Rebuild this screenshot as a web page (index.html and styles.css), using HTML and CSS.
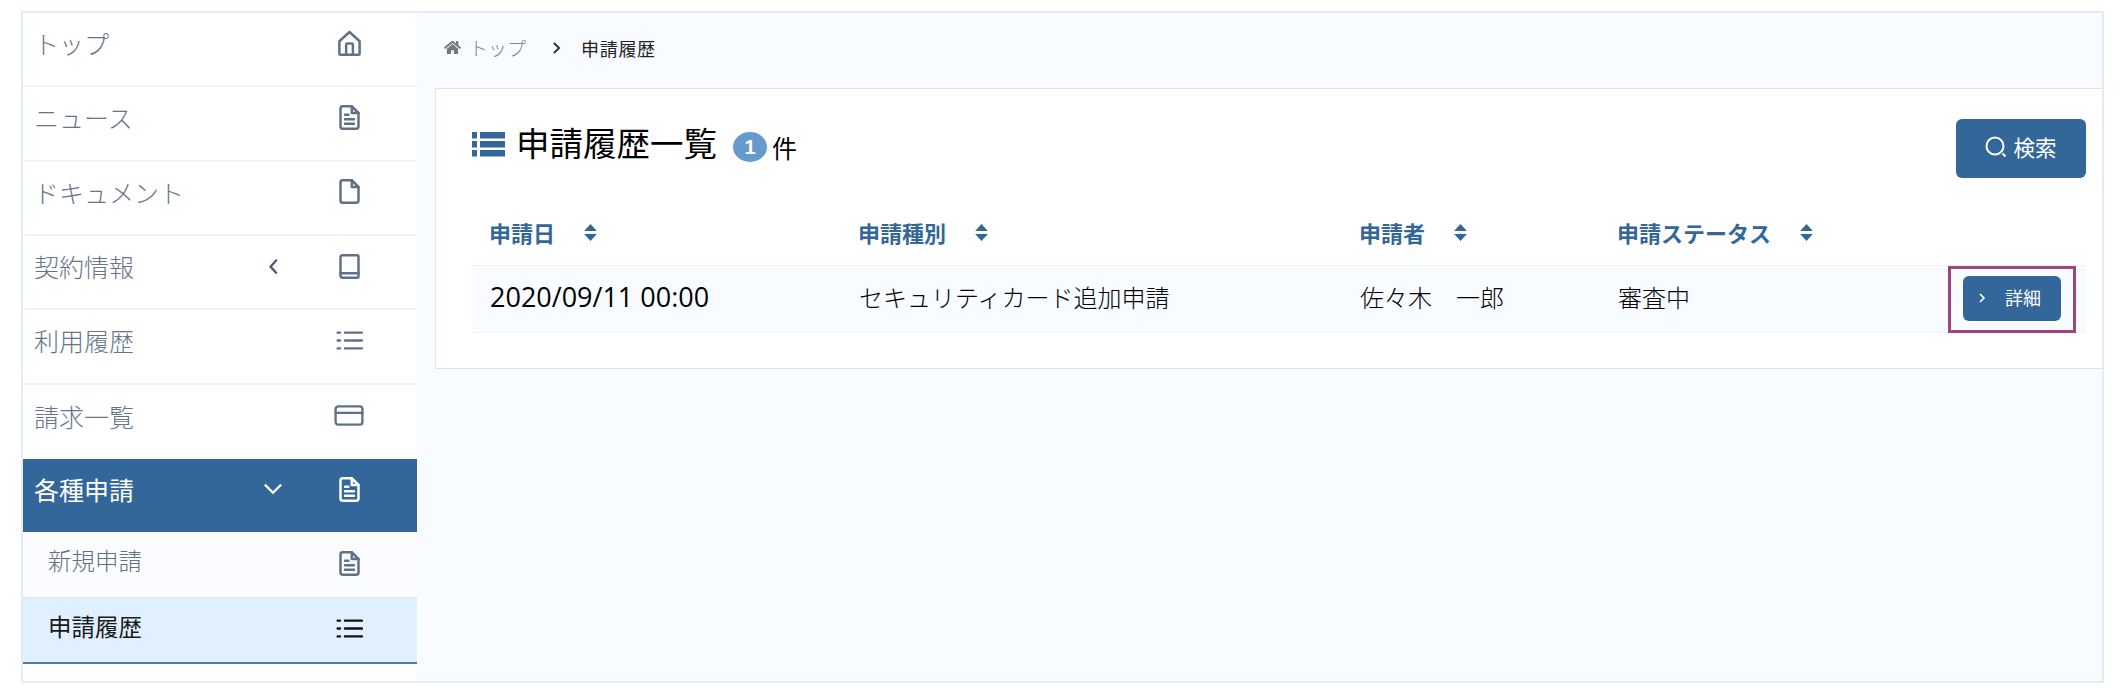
FILE: index.html
```html
<!DOCTYPE html>
<html lang="ja">
<head>
<meta charset="utf-8">
<title>申請履歴</title>
<link rel="stylesheet" href="styles.css">
</head>
<body>
<svg class="defs" width="0" height="0" aria-hidden="true">
  <defs>
    <symbol id="i-home" viewBox="0 0 24 24"><path d="M4 22h16a1 1 0 0 0 1-1V10L12 1.800 3 10v11a1 1 0 0 0 1 1z"/><path d="M9 22v-9a1 1 0 0 1 1-1h4a1 1 0 0 1 1 1v9"/></symbol>
    <symbol id="i-doc" viewBox="0 0 24 24"><path d="M14 2H6a2 2 0 0 0-2 2v16a2 2 0 0 0 2 2h12a2 2 0 0 0 2-2V8z"/><path d="M14 2v6h6"/><path d="M8 9.500h3M8 13.500h8M8 17.500h8"/></symbol>
    <symbol id="i-file" viewBox="0 0 24 24"><path d="M14 2H6a2 2 0 0 0-2 2v16a2 2 0 0 0 2 2h12a2 2 0 0 0 2-2V8z"/><path d="M14 2v6h6"/></symbol>
    <symbol id="i-book" viewBox="0 0 24 24"><path d="M6 2h13a1 1 0 0 1 1 1v18a1 1 0 0 1-1 1H6a2 2 0 0 1-2-2V4a2 2 0 0 1 2-2z"/><path d="M4 18h16"/></symbol>
    <symbol id="i-list" viewBox="0 0 24 24"><path d="M8 5h15M8 12h15M8 19h15"/><path d="M1.500 5h2M1.500 12h2M1.500 19h2"/></symbol>
    <symbol id="i-card" viewBox="0 0 28 24"><rect x="1.500" y="3.500" width="25" height="17" rx="2.500"/><path d="M1.500 9.500h25"/></symbol>
    <symbol id="i-sort" viewBox="0 0 12 16"><path d="M6 0l6 6.500H0zM6 16L0 9.500h12z"/></symbol>
  </defs>
</svg>
<div class="frame">
  <nav class="side">
    <a class="item"><span class="label">トップ</span><span class="chev"></span><svg class="ico"><use href="#i-home"/></svg></a>
    <a class="item"><span class="label">ニュース</span><span class="chev"></span><svg class="ico"><use href="#i-doc"/></svg></a>
    <a class="item"><span class="label">ドキュメント</span><span class="chev"></span><svg class="ico"><use href="#i-file"/></svg></a>
    <a class="item"><span class="label">契約情報</span><span class="chev"><svg class="chev-svg" viewBox="0 0 16 16"><path d="M11 3L6 8.500l5 5.500"/></svg></span><svg class="ico"><use href="#i-book"/></svg></a>
    <a class="item"><span class="label">利用履歴</span><span class="chev"></span><svg class="ico"><use href="#i-list"/></svg></a>
    <a class="item"><span class="label">請求一覧</span><span class="chev"></span><svg class="ico ico-wide"><use href="#i-card"/></svg></a>
    <a class="item active"><span class="label">各種申請</span><span class="chev"><svg class="chev-svg" viewBox="0 0 16 16"><path d="M1.500 4.500L8 11l6.500-6.500"/></svg></span><svg class="ico"><use href="#i-doc"/></svg></a>
    <a class="item sub"><span class="label">新規申請</span><span class="chev"></span><svg class="ico"><use href="#i-doc"/></svg></a>
    <a class="item sub current"><span class="label">申請履歴</span><span class="chev"></span><svg class="ico"><use href="#i-list"/></svg></a>
  </nav>
  <main class="main">
    <div class="crumbs">
      <svg class="crumb-home" viewBox="0 0 576 512"><path d="M280 148L96 300v164a16 16 0 0 0 16 16l112-.3a16 16 0 0 0 16-16V368a16 16 0 0 1 16-16h64a16 16 0 0 1 16 16v96a16 16 0 0 0 16 16l112 .3a16 16 0 0 0 16-16V300L296 148a12 12 0 0 0-16 0zM572 251l-84-69V44a12 12 0 0 0-12-12h-56a12 12 0 0 0-12 12v72l-89-74a48 48 0 0 0-61 0L4 251a12 12 0 0 0-2 17l26 31a12 12 0 0 0 17 2L280 107a12 12 0 0 1 16 0l235 194a12 12 0 0 0 17-2l26-31a12 12 0 0 0-2-17z"/></svg>
      <span class="crumb-top">トップ</span>
      <svg class="crumb-sep" viewBox="0 0 10 14"><path d="M2 2l5 5-5 5"/></svg>
      <span class="crumb-cur">申請履歴</span>
    </div>
    <section class="card">
      <header class="card-head">
        <div class="title">
          <svg class="title-ico" viewBox="0 0 33 26"><path d="M0 1h5v6.500H0zM8 1h25v6.500H8zM0 10h5v6.500H0zM8 10h25v6.500H8zM0 19h5v6.500H0zM8 19h25v6.500H8z"/></svg>
          <h1 class="title-text">申請履歴一覧</h1>
          <span class="badge">1</span>
          <span class="count">件</span>
        </div>
        <button class="btn-search"><svg class="search-ico" viewBox="0 0 22 22"><circle cx="10" cy="10" r="8.500"/><path d="M17.500 17.500l3 3"/></svg>検索</button>
      </header>
      <table class="table">
        <colgroup><col class="c1"><col class="c2"><col class="c3"><col class="c4"><col></colgroup>
        <thead>
          <tr>
            <th><span class="th-in">申請日<svg class="sort"><use href="#i-sort"/></svg></span></th>
            <th><span class="th-in">申請種別<svg class="sort"><use href="#i-sort"/></svg></span></th>
            <th><span class="th-in">申請者<svg class="sort"><use href="#i-sort"/></svg></span></th>
            <th><span class="th-in">申請ステータス<svg class="sort"><use href="#i-sort"/></svg></span></th>
            <th></th>
          </tr>
        </thead>
        <tbody>
          <tr>
            <td class="date">2020/09/11 00:00</td>
            <td>セキュリティカード追加申請</td>
            <td>佐々木　一郎</td>
            <td>審査中</td>
            <td class="action">
              <span class="mark">
                <button class="btn-detail"><svg class="detail-chev" viewBox="0 0 8 12"><path d="M2 2l4 4-4 4"/></svg><span>詳細</span></button>
              </span>
            </td>
          </tr>
        </tbody>
      </table>
    </section>
  </main>
</div>
</body>
</html>
```

FILE: styles.css
```css
* { box-sizing: border-box; }
html, body { margin: 0; padding: 0; height: 690px; overflow: hidden; background: #fff; }
body { font-family: "Noto Sans CJK JP", "Noto Sans", sans-serif; color: #111; }
.defs { position: absolute; }
.frame {
  display: flex;
  width: 2083px;
  height: 672px;
  margin: 11px 0 0 21px;
  border: 2px solid #e0ecf8;
  background: #f8fbff;
}
.side { width: 394px; flex: none; background: #fff; display: flex; flex-direction: column; }
.item {
  display: grid;
  grid-template-columns: 1fr 64px 86px;
  align-items: center;
  height: 74.33px;
  padding: 0 25px 12px 11px;
  font-size: 25px;
  line-height: 1.2;
  color: #66768a;
  border-bottom: 2px solid #f1f3f5;
}
.item:nth-child(6) { border-bottom: 0; }
.label { white-space: nowrap; font-weight: 300; }
.chev { display: flex; justify-content: center; color: #4a5b70; margin-left: -2px; }
.chev-svg { width: 20px; height: 20px; fill: none; stroke: currentColor; stroke-width: 1.8; }
.ico {
  width: 27px; height: 27px;
  justify-self: center;
  fill: none; stroke: #5f7186; stroke-width: 2.2; stroke-linejoin: round; stroke-linecap: round;
}
.ico-wide { width: 30px; }
.active { background: #336699; color: #fff; height: 73px; border-bottom: 0; }
.active .label { font-weight: 400; }
.active .chev { color: #fff; }
.active .ico { stroke: #fff; }
.sub {
  height: 66px;
  padding: 0 25px 8px 25px;
  font-size: 23.500px;
  background: #fbfcff;
  color: #66707c;
  border-bottom: 1px solid #e3e5e8;
}
.sub .ico { transform: translateY(3px); }
.current { background: #e1f0ff; color: #1a1a1a; border-bottom: 2px solid #4f7ba6; }
.current .ico { stroke: #111; }
.current .label { font-weight: 400; }
.main { flex: 1; min-width: 0; display: flex; flex-direction: column; }
.crumbs { display: flex; align-items: center; height: 75px; padding: 0 0 6px 27px; font-size: 18px; }
.crumb-home { width: 17px; height: 15px; fill: #777; }
.crumb-top { margin-left: 8px; color: #80868c; font-size: 19px; font-weight: 300; width: 60px; white-space: nowrap; }
.crumb-sep { width: 10px; height: 14px; margin-left: 23px; fill: none; stroke: #333; stroke-width: 2; }
.crumb-cur { margin-left: 19px; letter-spacing: .7px; color: #222; }
.card {
  margin-left: 18px;
  height: 281px;
  background: #fff;
  border: 1px solid #e3e3e3;
  border-right: 0;
  padding: 30px 16px 0 36px;
}
.card-head { display: flex; justify-content: space-between; align-items: flex-start; }
.title { display: flex; align-items: center; height: 60px; }
.title-ico { width: 33px; height: 26px; fill: #336699; margin-top: -10px; }
.title-text { margin: -14px 0 0 11px; font-size: 33.500px; font-weight: 400; line-height: 1.2; color: #000; }
.badge {
  margin-left: 16px;
  width: 34px; height: 30px;
  border-radius: 50%;
  background: #6699cc;
  color: #fff;
  font-size: 20px;
  font-weight: 700;
  font-family: "Liberation Sans", sans-serif;
  display: flex; align-items: center; justify-content: center;
  margin-top: -4px;
}
.count { margin-left: 5px; font-size: 25px; line-height: 1; margin-top: -4px; color: #000; }
.btn-search {
  width: 130px; height: 59px;
  border: 0;
  border-radius: 6px;
  background: #336699;
  color: #fff;
  font: inherit;
  font-size: 21.500px;
  display: flex; align-items: center; justify-content: center;
  padding: 0 0 4px;
}
.search-ico { width: 22px; height: 22px; margin-right: 6px; fill: none; stroke: #fff; stroke-width: 2; }
.table { width: 1614px; border-collapse: collapse; table-layout: fixed; }
.c1 { width: 369px; }
.c2 { width: 501px; }
.c3 { width: 258px; }
.c4 { width: 330px; }
th {
  height: 86px;
  padding: 20px 0 0 17px;
  text-align: left;
  color: #336699;
  font-size: 22px;
  font-weight: 700;
}
.th-in { display: inline-flex; align-items: center; }
.sort { width: 13px; height: 17px; fill: #336699; margin-left: 29px; margin-top: 2px; }
tbody tr { background: #f8fbff; }
td {
  height: 67px;
  padding: 0 0 4px 18px;
  font-size: 24px;
  font-weight: 300;
  color: #000;
  border-top: 1px solid #eef0f3;
  border-bottom: 1px solid #eef0f3;
  white-space: nowrap;
}
.date { font-family: "Open Sans", sans-serif; font-size: 27px; font-weight: 400; }
.action { padding: 0; position: relative; }
.mark {
  position: absolute;
  right: 10px; top: 0;
  width: 128px; height: 67px;
  padding-bottom: 2px;
  border: 3px solid #9e457f;
  display: flex; align-items: center; justify-content: center;
}
.btn-detail {
  width: 98px; height: 45px;
  border: 0;
  border-radius: 6px;
  background: #336699;
  color: #fff;
  font: inherit;
  font-size: 18px;
  font-weight: 400;
  display: flex; align-items: center;
  padding: 0 0 3px 15px;
}
.detail-chev { width: 8px; height: 12px; fill: none; stroke: #fff; stroke-width: 1.6; margin-right: 19px; margin-top: 3px; }
```
